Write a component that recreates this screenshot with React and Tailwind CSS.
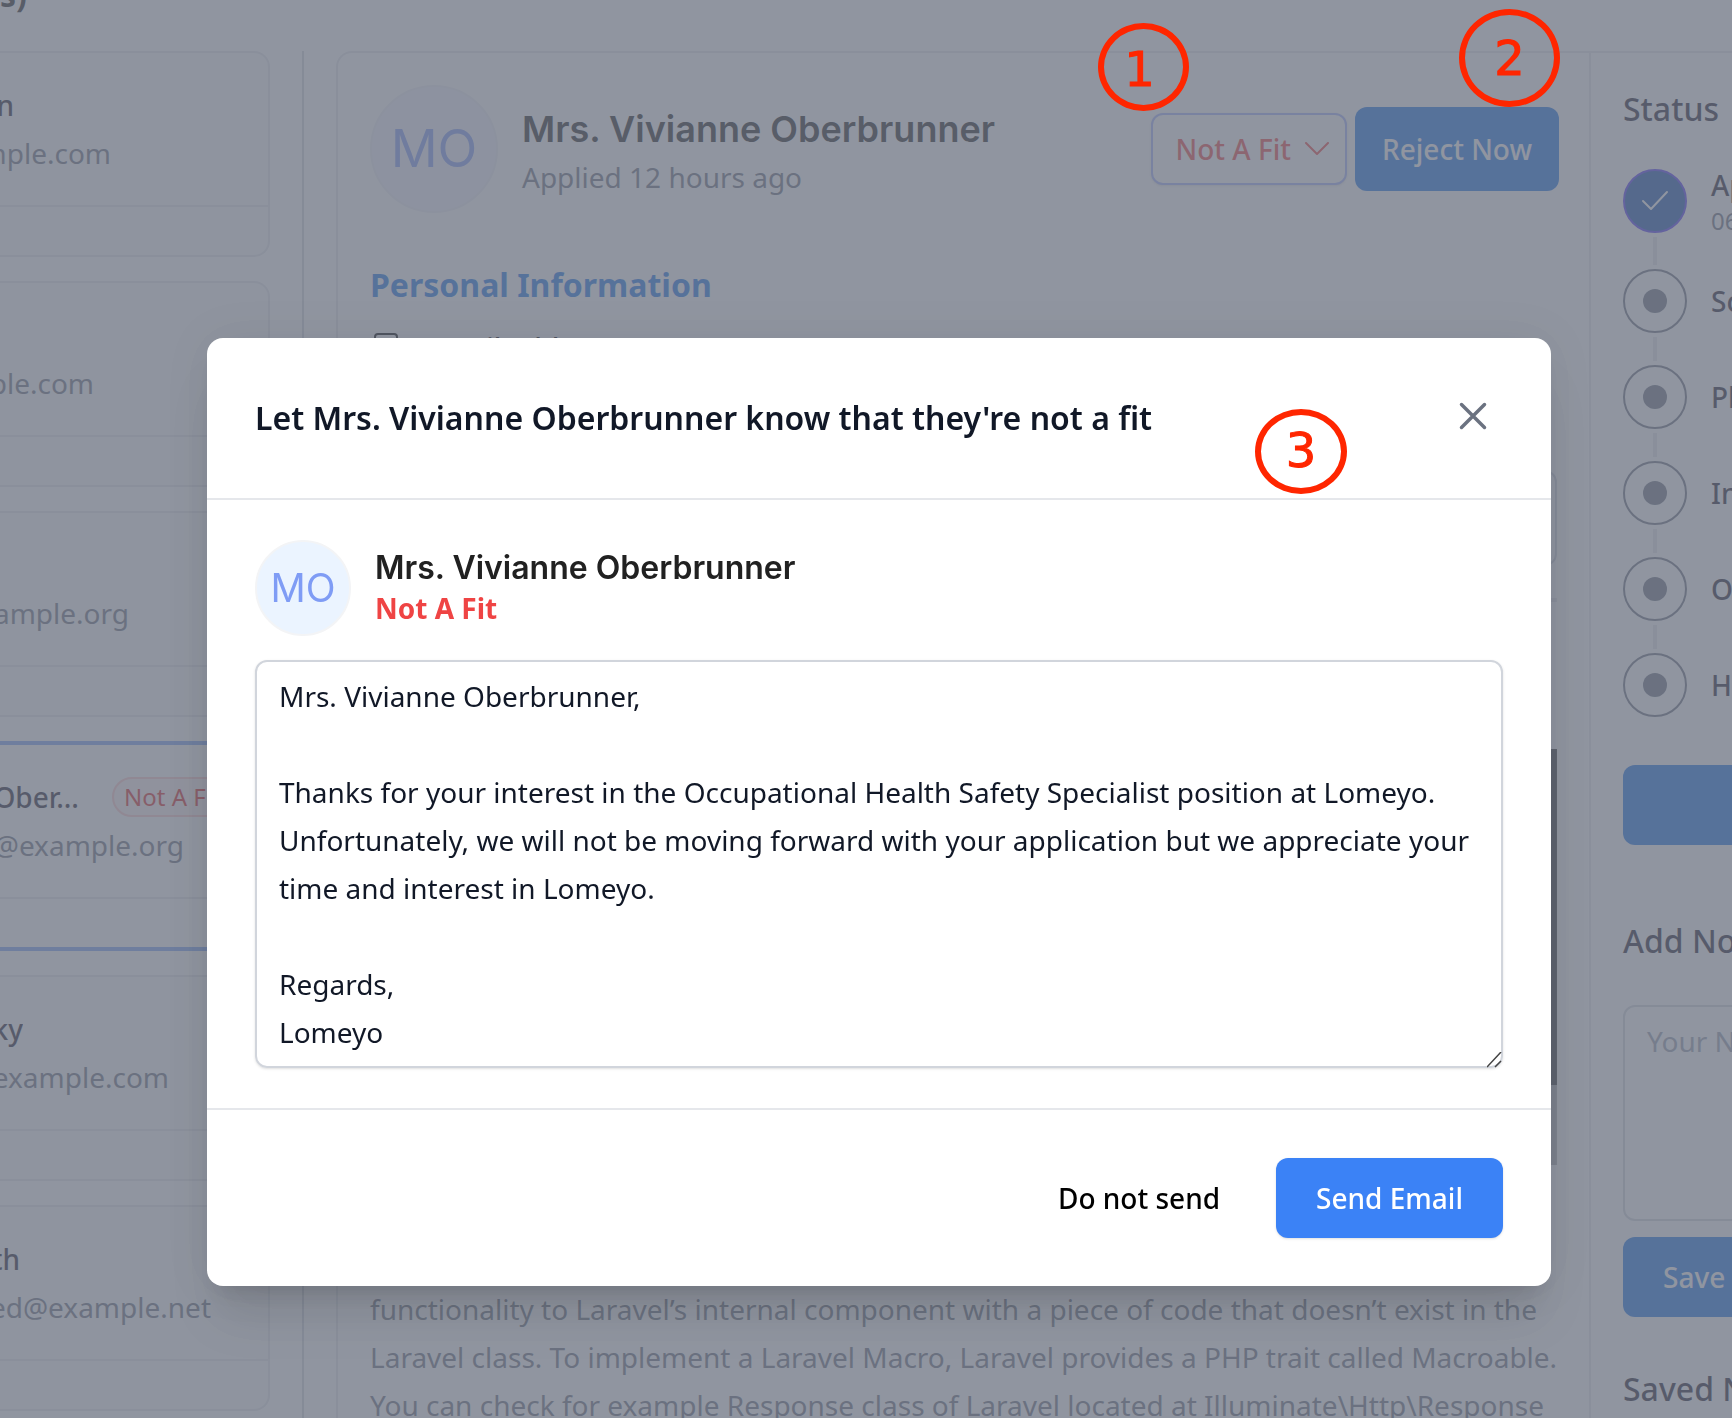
const CANDIDATES = [
  { name: "son", nameWidth: "w-[14px]", email: "example.com", emailWidth: "w-[111px]" },
  { name: "", nameWidth: "w-0", email: "example.com", emailWidth: "w-[94px]" },
  { name: "", nameWidth: "w-0", email: "example.org", emailWidth: "w-[129px]" },
  { name: "Vivianne Ober...", nameWidth: "w-[79px]", email: "@example.org", emailWidth: "w-[184px]", tag: "Not A Fit", selected: true },
  { name: "sky", nameWidth: "w-[23px]", email: "@example.com", emailWidth: "w-[169px]" },
  { name: "th", nameWidth: "w-[20px]", email: "ed@example.net", emailWidth: "w-[211px]" },
];

const STEPS = ["Screening", "Phone Screen", "Interview", "Offer", "Hired"];

const MESSAGE = `Mrs. Vivianne Oberbrunner,

Thanks for your interest in the Occupational Health Safety Specialist position at Lomeyo. Unfortunately, we will not be moving forward with your application but we appreciate your time and interest in Lomeyo.

Regards,
Lomeyo`;

function CandidateCard({ item }) {
  return (
    <li
      className={
        item.selected
          ? "rounded-r-2xl border-4 border-l-0 border-[#7ba4f7] bg-white"
          : "rounded-r-2xl border-2 border-l-0 border-gray-200 bg-gray-50"
      }
    >
      <div className="h-[152px] pt-7">
        <div className="flex h-12 items-center gap-[33px]">
          <p className={`flex justify-end overflow-hidden font-medium text-[#1e1b2e] ${item.nameWidth}`}>{item.name}</p>
          {item.tag && (
            <span className="flex h-10 items-center rounded-full border-2 border-red-200 bg-red-50 px-2.5 text-2xl text-[#dc2626]">
              {item.tag}
            </span>
          )}
        </div>
        <p className={`flex justify-end overflow-hidden text-[#6b7280] ${item.emailWidth}`}>{item.email}</p>
      </div>
      <div className="h-[50px] border-t-2 border-gray-200" />
    </li>
  );
}

function Applicant() {
  return (
    <main className="min-w-0 flex-1 rounded-tl-2xl border-t-2 border-l-2 border-gray-200 p-8">
      <div className="flex items-center">
        <div className="flex size-32 shrink-0 items-center justify-center rounded-full border-2 border-[#eef0f6] bg-[#f2f4ff] font-[Inter] text-[52px] text-[#7f9cf5]">
          MO
        </div>
        <div className="ml-6 flex-1 pt-2 whitespace-nowrap">
          <h2 className="font-[Inter] text-4xl leading-12 font-semibold text-[#212121]">Mrs. Vivianne Oberbrunner</h2>
          <p className="text-[#6b7280]">Applied 12 hours ago</p>
        </div>
        <button className="flex h-18 items-center gap-3.5 rounded-xl border-2 border-indigo-300 bg-white pr-4 pl-[22px] font-medium whitespace-nowrap text-[#ef4444] shadow-sm">
          Not A Fit
          <svg className="h-3.5 w-6" viewBox="0 0 24 14" fill="none" stroke="currentColor" strokeWidth="2" strokeLinecap="round" strokeLinejoin="round" aria-hidden="true">
            <path d="M1 1l11 11L23 1" />
          </svg>
        </button>
        <button className="-mr-0.5 ml-2 h-21 w-51 rounded-xl bg-[#1a73e8] font-medium whitespace-nowrap text-white">Reject Now</button>
      </div>

      <h3 className="mt-12 text-[32px] leading-12 font-bold text-[#1a73e8]">Personal Information</h3>
      <div className="mt-3.5 flex h-12 items-start gap-6.5 font-medium text-black">
        <svg className="mt-2 size-8" viewBox="0 0 32 32" fill="none" stroke="currentColor" strokeWidth="2" aria-hidden="true">
          <rect x="5" y="3" width="22" height="26" rx="3" />
          <path d="M10 12h12M10 18h12" />
        </svg>
        <span className="pt-px">Email address</span>
      </div>
      <div className="mt-[99px] h-24 rounded-xl border-2 border-gray-300" />
      <div className="mt-8 h-1 bg-gray-200" />
      <div className="mt-[147px] h-84 bg-[#404040]" />
      <div className="h-20 bg-[#b4b4b4]" />
      <p className="mt-30 -mr-1 h-36 text-[#6b7280]">
        functionality to Laravel’s internal component with a piece of code that doesn’t exist in the
        <br />
        Laravel class. To implement a Laravel Macro, Laravel provides a PHP trait called Macroable.
        <br />
        You can check for example Response class of Laravel located at Illuminate\Http\Response
      </p>
    </main>
  );
}

function Sidebar() {
  return (
    <aside className="w-[143px] shrink-0 overflow-hidden border-t-2 border-l-2 border-t-gray-200 border-l-gray-200 pt-8 pl-8 whitespace-nowrap text-[#1e1b2e]">
      <h3 className="text-[32px] leading-12 font-medium">Status</h3>
      <ol className="mt-9 font-medium">
        <li className="flex items-start">
          <div className="flex flex-col items-center gap-1">
            <div className="flex size-16 items-center justify-center rounded-full border-2 border-indigo-600 bg-[#1552b0] text-white">
              <svg className="size-7" viewBox="0 0 28 28" fill="none" stroke="currentColor" strokeWidth="2" strokeLinecap="round" strokeLinejoin="round" aria-hidden="true">
                <path d="M2 14l8 8L26 5" />
              </svg>
            </div>
            <div className="mb-1 h-7 w-1 bg-gray-200" />
          </div>
          <div className="ml-6">
            <p className="leading-8">Applied</p>
            <p className="text-2xl leading-10 font-normal text-[#6b7280]">06/14/2023</p>
          </div>
        </li>
        {STEPS.map((step, i) => (
          <li key={step} className="flex items-start">
            <div className="flex flex-col items-center gap-1">
              <div className="flex size-16 items-center justify-center rounded-full border-2 border-[#6b7280]">
                <div className="size-6 rounded-full bg-[#6b7280]" />
              </div>
              {i < STEPS.length - 1 && <div className="mb-1 h-6 w-1 bg-gray-200" />}
            </div>
            <p className="ml-6 leading-16">{step}</p>
          </li>
        ))}
      </ol>
      <button aria-label="Advance" className="mt-12 h-20 w-90 rounded-xl bg-[#1a73e8]" />
      <h3 className="mt-[59px] text-[32px] leading-12 font-medium">
        <label htmlFor="note">Add Note</label>
      </h3>
      <textarea
        id="note"
        placeholder="Your Note"
        className="mt-10 block h-54 w-90 resize-none rounded-xl border-2 border-gray-300 px-5.5 py-2.5 placeholder:text-gray-400"
      />
      <button className="mt-4 block h-20 rounded-xl bg-[#1a73e8] px-10 font-medium text-white">Save Note</button>
      <h3 className="mt-12 text-[32px] leading-12 font-medium">Saved Notes</h3>
    </aside>
  );
}

function RejectDialog() {
  return (
    <section
      role="dialog"
      aria-labelledby="dialog-title"
      className="mt-[338px] mr-[181px] ml-[207px] flex-1 self-start rounded-2xl bg-white shadow-[0_40px_50px_-10px_rgb(0_0_0/0.1),0_16px_20px_-12px_rgb(0_0_0/0.1),0_0_48px_rgb(0_0_0/0.07)]"
    >
      <header className="flex h-[162px] items-center justify-between border-b-2 border-gray-200 pr-16 pl-12">
        <h2 id="dialog-title" className="text-[32px] font-semibold text-[#111827]">
          Let Mrs. Vivianne Oberbrunner know that they're not a fit
        </h2>
        <button aria-label="Close" className="mb-1 text-[#6b7280]">
          <svg className="size-7" viewBox="0 0 28 28" fill="none" stroke="currentColor" strokeWidth="3.500" strokeLinecap="round" aria-hidden="true">
            <path d="M2.500 2.500l23 23M25.500 2.500l-23 23" />
          </svg>
        </button>
      </header>
      <div className="px-12 py-10">
        <div className="flex items-center gap-6">
          <div className="flex size-24 items-center justify-center rounded-full border-2 border-gray-100 bg-[#ebf4ff] font-[Inter] text-[39px] text-[#7f9cf5]">
            MO
          </div>
          <div>
            <p className="font-[Inter] text-[32px] leading-10 font-semibold text-[#212121]">Mrs. Vivianne Oberbrunner</p>
            <p className="leading-10 font-bold text-[#ef4444]">Not A Fit</p>
          </div>
        </div>
        <div className="relative mt-6">
          <textarea
            aria-label="Message"
            rows={8}
            defaultValue={MESSAGE}
            className="block w-full resize-none overflow-hidden rounded-xl border-2 border-gray-300 px-5.5 py-2.5 leading-12 text-[#111827] shadow-sm"
          />
          <svg className="absolute right-0 bottom-0 size-4" viewBox="0 0 16 16" stroke="#444" strokeWidth="1.500" aria-hidden="true">
            <path d="M0 15L14 0M8 15l6-6" />
          </svg>
        </div>
      </div>
      <footer className="flex items-center justify-end gap-4 border-t-2 border-gray-200 p-12 font-medium">
        <button className="h-20 px-10 text-black">Do not send</button>
        <button className="h-20 rounded-xl bg-[#3b82f6] px-10 text-white shadow-sm">Send Email</button>
      </footer>
    </section>
  );
}

export default function App() {
  return (
    <div className="h-screen overflow-hidden bg-white font-['Noto_Sans',sans-serif] text-[28px] leading-12">
      <h1 className="h-[51px] overflow-hidden text-[32px] font-bold text-[#212121]">
        <span className="-mt-[29px] block leading-12">s)</span>
      </h1>
      <div className="flex">
        <ul className="flex w-[270px] shrink-0 flex-col gap-6 overflow-hidden whitespace-nowrap">
          {CANDIDATES.map((item, i) => (
            <CandidateCard key={i} item={item} />
          ))}
        </ul>
        <div className="mx-8 w-0.5 bg-gray-300" />
        <Applicant />
        <Sidebar />
      </div>

      <div className="fixed inset-0 flex overflow-hidden bg-[#6b7280]/75">
        <RejectDialog />
      </div>

      <div className="font-['DejaVu_Sans',sans-serif] text-5xl text-[#ff2600] [-webkit-text-stroke:1px_#ff2600]">
        <div className="fixed top-[23px] left-[1098px] flex h-[88px] w-[91px] items-center justify-center rounded-[50%] border-6 border-[#ff2600] pt-1 pr-2">1</div>
        <div className="fixed top-[9px] left-[1459px] flex h-[98px] w-[101px] items-center justify-center rounded-[50%] border-6 border-[#ff2600]">2</div>
        <div className="fixed top-[409px] left-[1255px] flex h-[85px] w-[92px] items-center justify-center rounded-[50%] border-6 border-[#ff2600] pb-1">3</div>
      </div>
    </div>
  );
}
